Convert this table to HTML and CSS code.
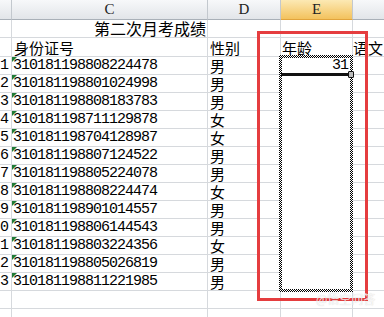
FILE: index.html
```html
<!DOCTYPE html>
<html lang="zh">
<head>
<meta charset="utf-8">
<title>Sheet</title>
<link rel="stylesheet" href="styles.css">
</head>
<body>
<div class="sheet">
  <div class="grid">
    <div class="cell hd corner"></div>
    <div class="cell hd">C</div>
    <div class="cell hd">D</div>
    <div class="cell hd sel">E</div>
    <div class="cell hd"></div>

    <div class="cell rh"></div>
    <div class="cell title">第二次月考成绩</div>
    <div class="cell"></div>
    <div class="cell"></div>
    <div class="cell"></div>

    <div class="cell rh"></div>
    <div class="cell txt">身份证号</div>
    <div class="cell txt">性别</div>
    <div class="cell txt ecol-h">年龄</div>
    <div class="cell txt fcol">语文</div>

    <div class="cell rh">1</div><div class="cell id">310181198808224478</div><div class="cell txt">男</div><div class="cell ecol num">31</div><div class="cell"></div>
    <div class="cell rh">2</div><div class="cell id">310181198801024998</div><div class="cell txt">男</div><div class="cell ecol"></div><div class="cell"></div>
    <div class="cell rh">3</div><div class="cell id">310181198808183783</div><div class="cell txt">男</div><div class="cell ecol"></div><div class="cell"></div>
    <div class="cell rh">4</div><div class="cell id">310181198711129878</div><div class="cell txt">女</div><div class="cell ecol"></div><div class="cell"></div>
    <div class="cell rh">5</div><div class="cell id">310181198704128987</div><div class="cell txt">女</div><div class="cell ecol"></div><div class="cell"></div>
    <div class="cell rh">6</div><div class="cell id">310181198807124522</div><div class="cell txt">男</div><div class="cell ecol"></div><div class="cell"></div>
    <div class="cell rh">7</div><div class="cell id">310181198805224078</div><div class="cell txt">男</div><div class="cell ecol"></div><div class="cell"></div>
    <div class="cell rh">8</div><div class="cell id">310181198808224474</div><div class="cell txt">女</div><div class="cell ecol"></div><div class="cell"></div>
    <div class="cell rh">9</div><div class="cell id">310181198901014557</div><div class="cell txt">男</div><div class="cell ecol"></div><div class="cell"></div>
    <div class="cell rh">0</div><div class="cell id">310181198806144543</div><div class="cell txt">男</div><div class="cell ecol"></div><div class="cell"></div>
    <div class="cell rh">1</div><div class="cell id">310181198803224356</div><div class="cell txt">女</div><div class="cell ecol"></div><div class="cell"></div>
    <div class="cell rh">2</div><div class="cell id">310181198805026819</div><div class="cell txt">男</div><div class="cell ecol"></div><div class="cell"></div>
    <div class="cell rh">3</div><div class="cell id">310181198811221985</div><div class="cell txt">男</div><div class="cell ecol last"></div><div class="cell"></div>

    <div class="cell rh"></div><div class="cell"></div><div class="cell"></div><div class="cell"></div><div class="cell"></div>
    <div class="cell rh"></div><div class="cell"></div><div class="cell"></div><div class="cell"></div><div class="cell"></div>
  </div>

  <div class="redbox"></div>
  <div class="marquee"></div>
  <div class="active-line"></div>
  <div class="handle"></div>
  <div class="watermark">@悟空问答</div>
</div>
</body>
</html>
```

FILE: styles.css
```css
html, body {
  margin: 0;
  padding: 0;
  background: #fff;
  overflow: hidden;
}

.sheet {
  position: relative;
  width: 384px;
  height: 317px;
  overflow: hidden;
  font-family: "Noto Sans CJK SC", "Noto Sans", sans-serif;
  color: #000;
}

.grid {
  display: grid;
  grid-template-columns: 12px 196px 73px 72px 40px;
  grid-template-rows: 20px 18px 19px repeat(15, 18px);
}

.cell {
  position: relative;
  box-sizing: border-box;
  border-right: 1px solid #d6d9dd;
  border-bottom: 1px solid #d6d9dd;
  display: flex;
  align-items: center;
  white-space: nowrap;
  font-size: 15px;
  line-height: 17px;
  padding-left: 2px;
}

.hd {
  background: linear-gradient(#f7f8fa, #e2e5e9);
  border-right: 1px solid #c3c8ce;
  border-bottom: 1px solid #a9b0b8;
  justify-content: center;
  padding-left: 0;
  font-family: "Liberation Serif", serif;
  font-size: 15px;
  color: #222;
}

.hd.sel {
  background: linear-gradient(#fce9b4, #f3c25d);
  border-bottom-color: #e1a43c;
}

.rh {
  justify-content: flex-end;
  padding-left: 0;
  padding-right: 3px;
  font-family: "Liberation Mono", monospace;
  font-size: 15px;
  letter-spacing: -1px;
  overflow: hidden;
}

.title {
  justify-content: flex-end;
  padding-left: 0;
  padding-right: 1px;
  font-size: 16px;
}

.txt {
  line-height: 17px;
}

.ecol-h {
  padding-left: 1px;
}

.fcol {
  padding-left: 0;
}

.id {
  font-family: "Liberation Mono", monospace;
  letter-spacing: -1px;
  padding-left: 1px;
  align-items: flex-end;
}

.id::before {
  content: "";
  position: absolute;
  top: 0;
  left: 0;
  border-top: 5px solid #1f7a35;
  border-right: 5px solid transparent;
}

.ecol {
  border-bottom-color: #fff;
}

.ecol.last {
  border-bottom-color: #d6d9dd;
}

.num {
  justify-content: flex-end;
  align-items: flex-end;
  font-family: "Liberation Mono", monospace;
  letter-spacing: -1px;
  padding-right: 4px;
}

.redbox {
  position: absolute;
  left: 257px;
  top: 31px;
  width: 111px;
  height: 270px;
  box-sizing: border-box;
  border: 3px solid #e53d3f;
}

.marquee {
  position: absolute;
  left: 279px;
  top: 55px;
  width: 74px;
  height: 237px;
  box-sizing: border-box;
  padding: 3px;
  background: repeating-conic-gradient(#000 0 25%, #fff 0 50%) 0 0 / 2px 2px;
  -webkit-mask: linear-gradient(#000 0 0) content-box, linear-gradient(#000 0 0);
  -webkit-mask-composite: xor;
  mask-composite: exclude;
}

.active-line {
  position: absolute;
  left: 281px;
  top: 73px;
  width: 69px;
  height: 3px;
  background: #111;
}

.handle {
  position: absolute;
  left: 348px;
  top: 71px;
  width: 4px;
  height: 5px;
  border: 1px solid #111;
  border-radius: 1px;
  background: #bbb;
}

.watermark {
  position: absolute;
  left: 316px;
  top: 292px;
  font-size: 12px;
  line-height: 14px;
  color: rgba(255, 255, 255, 0.85);
  text-shadow: 0 0 1px rgba(120, 120, 120, 0.4);
  white-space: nowrap;
}
```
